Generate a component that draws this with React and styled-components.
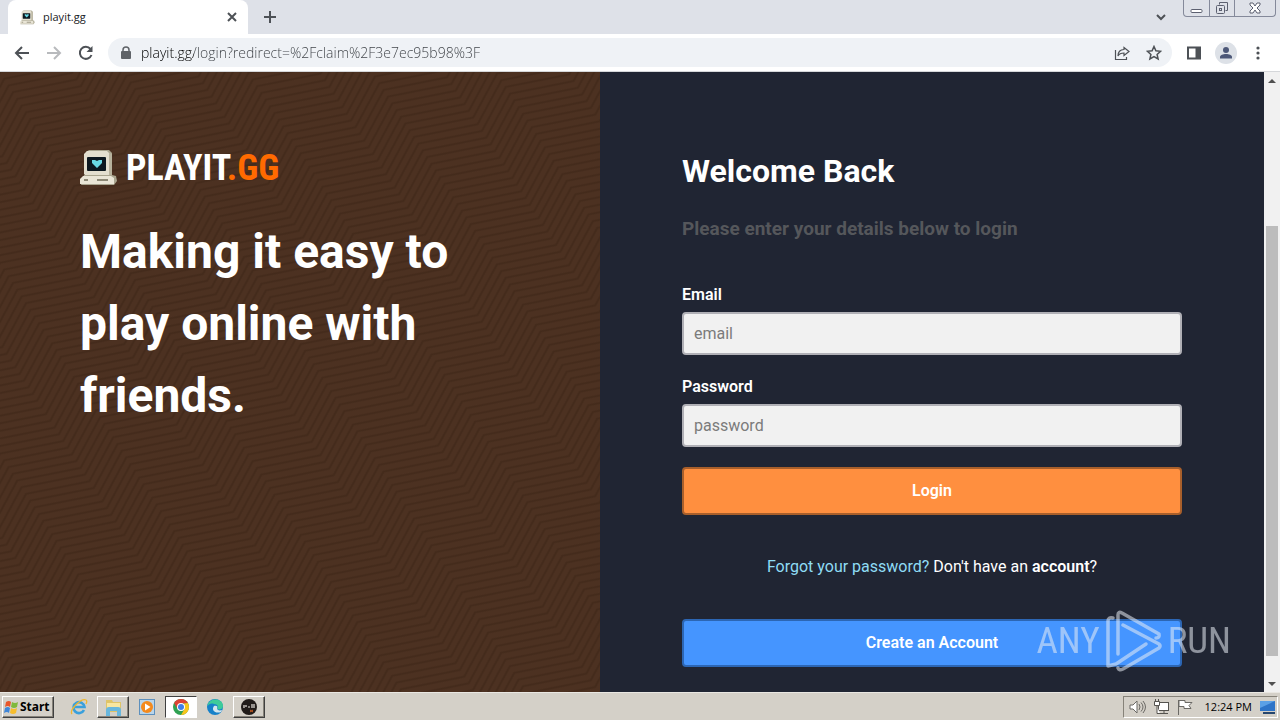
import React from "react";
import styled, { createGlobalStyle, css } from "styled-components";

const Global = createGlobalStyle`
  * { box-sizing: border-box; }
  html, body { margin: 0; padding: 0; }
  body { font-family: Roboto, "Liberation Sans", sans-serif; font-size: 16px; line-height: 24px; color: #fff; background: #202533; }
  button, input { font: inherit; margin: 0; }
  svg { display: block; flex: none; }
`;

const Screen = styled.div`
  position: relative;
  min-height: 100vh;
  display: flex;
  flex-direction: column;
`;

/* Browser chrome */
const TabStrip = styled.header`
  display: flex;
  height: 34px;
  padding-left: 8px;
  background: #dee1e8;
  color: #202124;
`;
const Tab = styled.div`
  display: flex;
  align-items: center;
  gap: 8px;
  width: 240px;
  padding: 0 8px 0 12px;
  border-radius: 8px 8px 0 0;
  background: #fff;
  font: 11px/16px "Open Sans", "Noto Sans", sans-serif;
`;
const TabTitle = styled.span`
  flex: 1;
`;
const IconButton = styled.button`
  display: flex;
  align-items: center;
  justify-content: center;
  width: ${(p) => p.$w || 32}px;
  height: ${(p) => p.$h || 32}px;
  padding: 0;
  border: 0;
  border-radius: 16px;
  background: transparent;
  color: ${(p) => p.$color || "#4d5156"};
`;
const Spacer = styled.div`
  flex: 1;
`;
const WindowControls = styled.div`
  display: flex;
  height: 17px;
  margin: 0 4px 0 6px;
  border: 1px solid #84899a;
  border-top: 0;
  border-radius: 0 0 4px 4px;
`;
const WindowButton = styled.button`
  display: flex;
  align-items: center;
  justify-content: center;
  width: ${(p) => p.$w}px;
  padding: 0;
  border: 0;
  background: transparent;
  color: #5c6070;
  & + & { border-left: 1px solid #84899a; }
`;
const Toolbar = styled.nav`
  display: flex;
  align-items: center;
  height: 38px;
  padding: 0 6px;
  background: #fff;
  border-bottom: 1px solid #d5d7da;
`;
const AddressBar = styled.div`
  flex: 1;
  display: flex;
  align-items: center;
  height: 29px;
  margin: 0 6px;
  padding: 0 2px 0 12px;
  border-radius: 15px;
  background: #eff2f6;
`;
const AddressInput = styled.input`
  flex: 1;
  height: 24px;
  margin-left: 9px;
  padding: 0;
  border: 0;
  outline: 0;
  font: 300 14px/24px "Open Sans", "Noto Sans", sans-serif;
  color: transparent;
  background: linear-gradient(90deg, #000 53px, #3c4045 53px);
  background-clip: text;
  -webkit-background-clip: text;
`;

/* Page */
const Viewport = styled.div`
  flex: 1;
  display: flex;
`;
const Page = styled.div`
  flex: 1;
  display: grid;
  grid-template-columns: 600fr 664fr;
`;
const Intro = styled.section`
  display: grid;
  background: #4c3121;
`;
const Texture = styled.svg`
  grid-area: 1 / 1;
  width: 100%;
  height: 100%;
`;
const IntroBody = styled.div`
  grid-area: 1 / 1;
  padding: 72px 80px 0;
`;
const Brand = styled.div`
  display: flex;
  align-items: center;
  gap: 8px;
  height: 48px;
  font: bold 36px/48px "Roboto Condensed", "Liberation Sans Narrow", Roboto, sans-serif;
`;
const BrandAccent = styled.span`
  color: #ff6a00;
`;
const Headline = styled.h1`
  max-width: 400px;
  margin: 24px 0 0;
  font-size: 48px;
  line-height: 72px;
  font-weight: 700;
`;
const LoginSide = styled.main`
  display: flex;
  justify-content: center;
  padding: 75px 24px 25px;
  background: #202533;
`;
const Form = styled.form`
  width: 100%;
  max-width: 500px;
`;
const Title = styled.h2`
  margin: 0 0 20px;
  font-size: 32px;
  line-height: 48px;
  font-weight: 700;
`;
const Subtitle = styled.h3`
  margin: 0 0 40px;
  font-size: 19px;
  line-height: 28px;
  font-weight: 700;
  color: #55575b;
`;
const Field = styled.div`
  display: flex;
  flex-direction: column;
  gap: 5px;
  margin-bottom: 20px;
`;
const Label = styled.label`
  font-weight: 600;
`;
const TextInput = styled.input`
  height: 43px;
  padding: 0 10px;
  border: 2px solid #b0b0b6;
  border-radius: 4px;
  background: #f1f1f1;
  color: #222;
  &::placeholder { color: #7b7b7b; opacity: 1; }
`;
const ActionButton = styled.button`
  display: block;
  width: 100%;
  height: 48px;
  border: 2px solid ${(p) => p.$edge};
  border-radius: 4px;
  background: ${(p) => p.$fill};
  color: #fff;
  font-weight: 600;
`;
const Help = styled.p`
  margin: 40px 0;
  text-align: center;
`;
const TextLink = styled.a`
  color: ${(p) => (p.$strong ? "#fff" : "#8fdcf5")};
  font-weight: ${(p) => (p.$strong ? 600 : 400)};
  text-decoration: none;
`;
const Scrollbar = styled.div`
  display: flex;
  flex-direction: column;
  align-items: center;
  width: 16px;
  background: #f1f1f1;
`;
const ScrollArrow = styled.div`
  display: flex;
  align-items: center;
  justify-content: center;
  height: 17px;
`;
const ScrollTrack = styled.div`
  flex: ${(p) => p.$grow} 1 0;
`;
const ScrollThumb = styled.div`
  flex: 430 1 0;
  width: 12px;
  background: #bcbcbc;
`;

/* Taskbar */
const raised = css`
  border: 1px solid;
  border-color: #fff #404040 #404040 #fff;
  box-shadow: inset -1px -1px #868279;
`;
const pressed = css`
  border: 1px solid;
  border-color: #404040 #fff #fff #404040;
  background: #fff;
`;
const Taskbar = styled.footer`
  display: flex;
  align-items: center;
  height: 28px;
  padding: 1px 2px 0;
  border-top: 1px solid #e9e7e2;
  background: #d4d0c8;
  color: #000;
`;
const StartButton = styled.button`
  ${raised}
  display: flex;
  align-items: center;
  gap: 1px;
  height: 22px;
  width: 52px;
  padding: 0 1px;
  background: #d4d0c8;
  font: bold 12px/16px "Noto Sans", sans-serif;
`;
const TaskButtons = styled.div`
  display: flex;
  align-items: center;
  gap: 2px;
  margin-left: 9px;
`;
const TaskButton = styled.button`
  display: flex;
  align-items: center;
  justify-content: center;
  width: 32px;
  height: 22px;
  padding: 0;
  border: 0;
  background: #d4d0c8;
  ${(p) => p.$state === "raised" && raised}
  ${(p) => p.$state === "pressed" && pressed}
`;
const Tray = styled.div`
  display: flex;
  align-items: center;
  gap: 7px;
  height: 22px;
  margin-left: auto;
  padding: 0 1px 0 5px;
  border: 1px solid;
  border-color: #868279 #fff #fff #868279;
`;
const Clock = styled.time`
  margin: 0 0 0 4px;
  font: 11px/16px "Open Sans", "Noto Sans", sans-serif;
`;

/* Watermark floating over the lower right corner of the page */
const Watermark = styled.div`
  position: absolute;
  right: 49px;
  bottom: 48px;
  display: flex;
  align-items: center;
  gap: 6px;
  opacity: 0.55;
  color: #e8edf5;
  font: 37px/62px "Roboto Condensed", "Liberation Sans Narrow", Roboto, sans-serif;
  pointer-events: none;
`;

const Computer = ({ size }) => (
  <svg width={size} height={size} viewBox="0 0 38 38" aria-hidden="true">
    <path d="M6 3l3-2h20l3 3v23l-3 2z" fill="#a9a58f" />
    <path d="M4 5l3-3h20l3 3v20l-2 2H6l-2-2z" fill="#e3dfcf" />
    <path d="M29 4l3 1v21l-3 2z" fill="#b7b29d" />
    <rect x="7" y="8" width="19" height="14" rx="1" fill="#0c1820" />
    <path d="M12 11h3l2 1 2-1h3v3l-5 5-5-5z" fill="#68d9e5" />
    <path d="M4 26h28l4 1 1 5-3 4H1z" fill="#a9a58f" />
    <path d="M3 27h28l3 2v6H0v-5z" fill="#e9e5d6" />
    <path d="M4 31h4M17 31h11" stroke="#8c8875" strokeWidth="2" />
  </svg>
);

const Waves = () => (
  <Texture aria-hidden="true">
    <defs>
      <pattern id="waves" width="104" height="8" patternUnits="userSpaceOnUse" patternTransform="rotate(-33)">
        <g fill="none" stroke="#3d2618" strokeWidth="2" strokeOpacity="0.6">
          {[-32, -24, -16, -8, 0, 8].map((y) => (
            <path key={y} d={`M-4 ${y + 2}L0 ${y}L60 ${y + 24}L104 ${y}L108 ${y + 2}`} />
          ))}
        </g>
      </pattern>
    </defs>
    <rect width="100%" height="100%" fill="url(#waves)" />
  </Texture>
);

const Line = ({ size = 16, width = 2, children }) => (
  <svg width={size} height={size} viewBox="0 0 16 16" fill="none" stroke="currentColor" strokeWidth={width} aria-hidden="true">
    {children}
  </svg>
);

export default function App() {
  return (
    <Screen>
      <Global />
      <TabStrip>
        <Tab>
          <Computer size={15} />
          <TabTitle>playit.gg</TabTitle>
          <IconButton $w={16} $h={16} aria-label="Close tab">
            <Line width={2}><path d="M4 4l8 8M12 4l-8 8" /></Line>
          </IconButton>
        </Tab>
        <IconButton $w={44} $h={34} aria-label="New tab">
          <Line width={2}><path d="M8 2v12M2 8h12" /></Line>
        </IconButton>
        <Spacer />
        <IconButton $w={32} $h={34} aria-label="Search tabs">
          <Line width={2}><path d="M4 6l4 4 4-4" /></Line>
        </IconButton>
        <WindowControls>
          <WindowButton $w={25} aria-label="Minimize">
            <svg width="13" height="13" viewBox="0 0 13 13" fill="#fff" stroke="currentColor"><rect x="1" y="7.5" width="11" height="3" rx="1" /></svg>
          </WindowButton>
          <WindowButton $w={25} aria-label="Restore">
            <svg width="14" height="14" viewBox="0 0 14 14" fill="none" stroke="currentColor"><path d="M4.500 3.500v-2h8v8h-2" /><rect x="1.500" y="4.500" width="8" height="8" rx="1" /><rect x="4.500" y="7.500" width="2" height="2" /></svg>
          </WindowButton>
          <WindowButton $w={41} aria-label="Close">
            <svg width="12" height="12" viewBox="0 0 12 12" fill="#fff" stroke="currentColor"><path d="M1 1h3l2 3 2-3h3v2L8 6l3 3v2H8L6 8l-2 3H1V9l3-3-3-3z" /></svg>
          </WindowButton>
        </WindowControls>
      </TabStrip>
      <Toolbar>
        <IconButton aria-label="Back"><Line><path d="M15 8H2M8 2L2 8l6 6" /></Line></IconButton>
        <IconButton $color="#b8babd" aria-label="Forward"><Line><path d="M1 8h13M8 2l6 6-6 6" /></Line></IconButton>
        <IconButton aria-label="Reload"><Line><path d="M13.500 10A6 6 0 1 1 12.500 4" /><path d="M14.500 1v6h-6z" fill="currentColor" stroke="none" /></Line></IconButton>
        <AddressBar>
          <svg width="12" height="14" viewBox="0 0 12 14" aria-hidden="true"><path d="M3 6V4a3 3 0 0 1 6 0v2" fill="none" stroke="#5f6368" strokeWidth="1.500" /><rect x="1" y="5" width="10" height="8" rx="1" fill="#5f6368" /></svg>
          <AddressInput aria-label="Address" defaultValue="playit.gg/login?redirect=%2Fclaim%2F3e7ec95b98%3F" />
          <IconButton aria-label="Share"><Line width={1.2}><path d="M1.500 5v9.500h11V12" /><path d="M10 2.500L15 6.500l-5 4V8C7 8 5 9 4 11c0-4 2-6.500 6-6.500z" /></Line></IconButton>
          <IconButton aria-label="Bookmark"><Line width={1.5}><path d="M8 1.500l1.900 4.300 4.700.5-3.500 3.100 1 4.600L8 11.600 3.900 14l1-4.600L1.400 6.300l4.700-.5z" /></Line></IconButton>
        </AddressBar>
        <IconButton aria-label="Side panel"><Line width={2}><path d="M2 2.500h12v11H2z" /><path d="M9.500 2h5v12h-5z" fill="currentColor" stroke="none" /></Line></IconButton>
        <IconButton aria-label="Profile">
          <svg width="22" height="22" viewBox="0 0 22 22"><circle cx="11" cy="11" r="11" fill="#dde1e7" /><circle cx="11" cy="8" r="3" fill="#4d5878" /><path d="M5 16.500v-1.500c0-2 3-3 6-3s6 1 6 3v1.500z" fill="#4d5878" /></svg>
        </IconButton>
        <IconButton aria-label="Menu"><Line><g fill="currentColor" stroke="none"><circle cx="8" cy="3" r="1.600" /><circle cx="8" cy="8" r="1.600" /><circle cx="8" cy="13" r="1.600" /></g></Line></IconButton>
      </Toolbar>

      <Viewport>
        <Page>
          <Intro>
            <Waves />
            <IntroBody>
              <Brand><Computer size={38} /><span>PLAYIT<BrandAccent>.GG</BrandAccent></span></Brand>
              <Headline>Making it easy to play online with friends.</Headline>
            </IntroBody>
          </Intro>
          <LoginSide>
            <Form onSubmit={(e) => e.preventDefault()}>
              <Title>Welcome Back</Title>
              <Subtitle>Please enter your details below to login</Subtitle>
              <Field>
                <Label htmlFor="email">Email</Label>
                <TextInput id="email" type="email" placeholder="email" />
              </Field>
              <Field>
                <Label htmlFor="password">Password</Label>
                <TextInput id="password" type="password" placeholder="password" />
              </Field>
              <ActionButton type="submit" $fill="#ff8f3f" $edge="#a85f2b">Login</ActionButton>
              <Help>
                <TextLink href="#forgot">Forgot your password?</TextLink> Don't have an <TextLink $strong href="#account">account</TextLink>?
              </Help>
              <ActionButton type="button" $fill="#4595ff" $edge="#2c66b4">Create an Account</ActionButton>
            </Form>
          </LoginSide>
        </Page>
        <Scrollbar aria-hidden="true">
          <ScrollArrow><svg width="8" height="4" viewBox="0 0 8 4"><path d="M0 4l4-4 4 4z" fill="#505050" /></svg></ScrollArrow>
          <ScrollTrack $grow={137} />
          <ScrollThumb />
          <ScrollTrack $grow={19} />
          <ScrollArrow><svg width="8" height="4" viewBox="0 0 8 4"><path d="M0 0l4 4 4-4z" fill="#505050" /></svg></ScrollArrow>
        </Scrollbar>
      </Viewport>

      <Taskbar>
        <StartButton>
          <svg width="15" height="15" viewBox="0 0 15 15" aria-hidden="true">
            <path d="M2 2q3-2 5 0L6 7Q4 5 1 7z" fill="#e8562a" /><path d="M8 2q3 2 6 0l-1 5q-3 2-6 0z" fill="#7fb93c" />
            <path d="M1 8q3-2 5 0l-1 5q-2-2-5 0z" fill="#3f86d8" /><path d="M7 8q3 2 6 0l-1 5q-3 2-6 0z" fill="#f6bd2c" />
          </svg>
          Start
        </StartButton>
        <TaskButtons>
          <TaskButton aria-label="Internet Explorer">
            <svg width="18" height="18" viewBox="0 0 18 18" fill="none"><path d="M14 12a5.500 5.500 0 1 1 .5-3H5" stroke="#3aa0dc" strokeWidth="2.600" /><path d="M2 16C-1 12 11 0 16 2c1 .5 1 2 0 4" stroke="#f0b72f" strokeWidth="1.300" /></svg>
          </TaskButton>
          <TaskButton $state="raised" aria-label="Files">
            <svg width="17" height="17" viewBox="0 0 17 17"><path d="M1 1h6l1 2h8v10H1z" fill="#dfc468" /><path d="M2 4h13v5H2z" fill="#f8e6a0" /><path d="M1 17v-6q0-3 3-3h9q3 0 3 3v6h-4v-5H5v5z" fill="#69b7dd" /></svg>
          </TaskButton>
          <TaskButton aria-label="Media Player">
            <svg width="16" height="16" viewBox="0 0 16 16"><rect x="0.500" y="0.500" width="15" height="15" fill="#b9d5ea" stroke="#5d90bd" /><circle cx="8" cy="8" r="6" fill="#f48a1d" /><path d="M6 4.500v7l5.500-3.500z" fill="#fff" /></svg>
          </TaskButton>
          <TaskButton $state="pressed" aria-label="Chrome">
            <svg width="16" height="16" viewBox="0 0 16 16"><circle cx="8" cy="8" r="8" fill="#2fa152" /><path d="M1.100 4A8 8 0 0 1 14.900 4L15 4.500H8L4.600 10z" fill="#dd4235" /><path d="M14.900 4A8 8 0 0 1 8 16l3.500-6-.5-5.500z" fill="#f9c51b" /><circle cx="8" cy="8" r="4" fill="#fff" /><circle cx="8" cy="8" r="3" fill="#3f7fe8" /></svg>
          </TaskButton>
          <TaskButton aria-label="Edge">
            <svg width="16" height="16" viewBox="0 0 16 16"><circle cx="8" cy="8" r="8" fill="#1681c9" /><path d="M.5 6C3-2 16-1 16 7c0 3-3 4-6 3 2-3 0-5-3-5C4 4 2 5 .5 7z" fill="#3ecb9a" /><path d="M7 7c-3 4 1 8 7 6l1-2c-3 1-5 0-5-2 1-1 0-3-3-2z" fill="#d4e6ee" /></svg>
          </TaskButton>
          <TaskButton $state="raised" aria-label="playit agent">
            <svg width="16" height="16" viewBox="0 0 16 16"><circle cx="8" cy="8" r="8" fill="#211c1a" /><path d="M3 6v3M5 6v2M7 8h2M11 5v4M13 5v4" stroke="#e6e2dc" strokeWidth="1.200" /><path d="M9 11l3 2M12 11l-3 2" stroke="#c65b22" /></svg>
          </TaskButton>
        </TaskButtons>
        <Tray>
          <svg width="17" height="16" viewBox="0 0 17 16" fill="#fff" stroke="#6b6965"><path d="M1 6h3l4-4v12l-4-4H1z" /><path d="M10 5q2 3 0 6M12 3.500q4 4.500 0 9M14 2q5 6 0 12" fill="none" /></svg>
          <svg width="17" height="16" viewBox="0 0 17 16" fill="#fff" stroke="#55534f"><rect x="5.500" y="3.500" width="10" height="8" /><path d="M7 14.500h8M11 12v2" /><path d="M1.500 2.500h5v4h-5zM2.500 0v2M5.500 0v2M4 7v7.500h3" /></svg>
          <svg width="17" height="16" viewBox="0 0 17 16" fill="#fff" stroke="#6b6965"><path d="M1.500 1v15M2 1.500h6v2h7l-3 3 2 3H7v-2H2z" /></svg>
          <Clock>12:24 PM</Clock>
          <svg width="17" height="16" viewBox="0 0 17 16"><path d="M1 2h15v10H1z" fill="#2e74c8" /><path d="M1 2h15L1 9z" fill="#5ba0e6" /><path d="M4 13h12v2H4z" fill="#26466e" /></svg>
        </Tray>
      </Taskbar>

      <Watermark>
        <span>ANY</span>
        <svg width="56" height="62" viewBox="0 0 56 62" fill="none" stroke="currentColor" strokeWidth="3.500" strokeLinejoin="round" strokeLinecap="round" aria-hidden="true">
          <path d="M7 8Q2 7 2 11V56L10 54L40 34" />
          <path d="M12 44V5Q12 1 16 3L53 24Q54 28 50 28" />
          <path d="M17 15L53 34Q55 36 53 38L17 59Q13 61 12 58" />
        </svg>
        <span>RUN</span>
      </Watermark>
    </Screen>
  );
}
